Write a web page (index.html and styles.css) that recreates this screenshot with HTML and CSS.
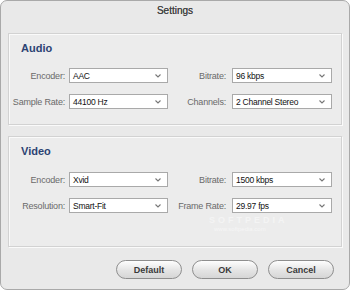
FILE: index.html
```html
<!DOCTYPE html>
<html lang="en">
<head>
    <meta charset="UTF-8">
    <title>Settings</title>
    <link rel="stylesheet" href="styles.css">
</head>
<body>
<div class="window">
    <div class="title">Settings</div>

    <div class="panel audio">
        <h3>Audio</h3>
        <div class="fields">
            <label>Encoder:</label>
            <div class="select">AAC<svg viewBox="0 0 6 4"><path d="M0.5 0.5 L3 3 L5.5 0.5"/></svg></div>
            <label>Bitrate:</label>
            <div class="select">96 kbps<svg viewBox="0 0 6 4"><path d="M0.5 0.5 L3 3 L5.5 0.5"/></svg></div>
            <label>Sample Rate:</label>
            <div class="select">44100 Hz<svg viewBox="0 0 6 4"><path d="M0.5 0.5 L3 3 L5.5 0.5"/></svg></div>
            <label>Channels:</label>
            <div class="select">2 Channel Stereo<svg viewBox="0 0 6 4"><path d="M0.5 0.5 L3 3 L5.5 0.5"/></svg></div>
        </div>
    </div>

    <div class="panel video">
        <h3>Video</h3>
        <div class="fields">
            <label>Encoder:</label>
            <div class="select">Xvid<svg viewBox="0 0 6 4"><path d="M0.5 0.5 L3 3 L5.5 0.5"/></svg></div>
            <label>Bitrate:</label>
            <div class="select">1500 kbps<svg viewBox="0 0 6 4"><path d="M0.5 0.5 L3 3 L5.5 0.5"/></svg></div>
            <label>Resolution:</label>
            <div class="select">Smart-Fit<svg viewBox="0 0 6 4"><path d="M0.5 0.5 L3 3 L5.5 0.5"/></svg></div>
            <label>Frame Rate:</label>
            <div class="select">29.97 fps<svg viewBox="0 0 6 4"><path d="M0.5 0.5 L3 3 L5.5 0.5"/></svg></div>
        </div>
        <span class="mark">SOFTPEDIA</span>
        <span class="mark-url">www.softpedia.com</span>
    </div>

    <div class="buttons">
        <button type="button">Default</button>
        <button type="button">OK</button>
        <button type="button">Cancel</button>
    </div>
</div>
</body>
</html>
```

FILE: styles.css
```css
body {
    margin: 0;
    background: #ffffff;
    font-family: "Liberation Sans", Arial, sans-serif;
}
.window {
    width: 350px;
    height: 290px;
    box-sizing: border-box;
    border: 1px solid #a9a9a9;
    border-radius: 7px;
    background: #e9e9e9;
    overflow: hidden;
}
.title {
    height: 32px;
    padding-top: 3px;
    box-sizing: border-box;
    text-align: center;
    font-size: 10px;
    line-height: 14px;
    color: #454545;
    text-shadow: 0 0 0.4px #454545;
}
.panel {
    position: relative;
    margin: 0 7px;
    box-sizing: border-box;
    border: 1px solid #d2d2d2;
    box-shadow: inset 1px 1px 0 #fafafa, 1px 1px 0 #fafafa;
    background: #ececec;
    padding: 7px 0 0 1px;
}
.audio {
    height: 92px;
}
.video {
    height: 111px;
    margin-top: 11px;
}
.panel h3 {
    margin: 0 0 0 11px;
    font-size: 11px;
    line-height: 14px;
    color: #2c4373;
}
.fields {
    display: grid;
    grid-template-columns: 59px 99px 64px 100px;
    grid-auto-rows: 15px;
    row-gap: 11px;
    margin-top: 13px;
    align-items: center;
}
.video .fields {
    margin-top: 14px;
}
.fields label {
    text-align: right;
    padding-right: 4px;
    font-size: 9px;
    letter-spacing: -0.2px;
    color: #6a6a6a;
    white-space: nowrap;
}
.fields label:nth-child(4n+3) {
    padding-right: 6px;
}
.select {
    height: 15px;
    box-sizing: border-box;
    border: 1px solid #a9a9a9;
    background: #ffffff;
    padding-left: 3px;
    display: flex;
    align-items: center;
    justify-content: space-between;
    font-size: 8.5px;
    letter-spacing: -0.25px;
    color: #111111;
}
.select svg {
    width: 6px;
    height: 4px;
    margin-right: 6px;
    fill: none;
    stroke: #777777;
    stroke-width: 1.1;
}
.mark {
    position: absolute;
    left: 200px;
    top: 78px;
    font-size: 9px;
    font-weight: bold;
    letter-spacing: 3px;
    color: #f4f4f4;
}
.mark-url {
    position: absolute;
    left: 205px;
    top: 89px;
    font-size: 6px;
    color: #f6f6f6;
}
.buttons {
    display: flex;
    justify-content: flex-end;
    gap: 10px;
    padding-right: 15px;
    margin-top: 13px;
}
button {
    width: 66px;
    height: 19px;
    border: 1px solid #8e8e8e;
    border-radius: 10px;
    background: linear-gradient(#fefefe, #e4e4e4 55%, #d6d6d6);
    font-family: "Liberation Sans", Arial, sans-serif;
    font-size: 9px;
    font-weight: bold;
    color: #3a3a3a;
    padding: 0;
    cursor: pointer;
}
```
